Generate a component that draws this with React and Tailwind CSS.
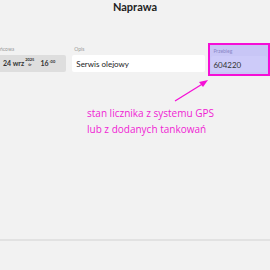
export default function App() {
  return (
    <div className="w-[270px] h-[270px] overflow-hidden bg-[#f2f2f2] relative" style={{ fontFamily: 'Lato, "Noto Sans", sans-serif' }}>
      <header className="h-[26px] flex items-center justify-center">
        <h1 className="text-[11px] font-bold text-[#222] mt-[-11px]">Naprawa</h1>
      </header>

      <div className="flex items-start mt-[18px] ml-[-32px]">
        {/* Data końcowa */}
        <div className="w-[99px] flex flex-col">
          <span className="text-[5px] text-[#9a9a9a] leading-none h-[9px] pt-[3px] pl-[15px] whitespace-nowrap">Data końcowa</span>
          <div className="h-[17px] bg-[#dedede] rounded-[2px] flex items-center pl-[35px] text-[#333] mt-[2px]">
            <span className="text-[7px] font-bold">24 wrz</span>
            <span className="flex flex-col items-center leading-none text-[4px] font-bold mx-[1px] -mt-[2px]">
              <span>2025</span>
              <span className="mt-[1px]">śr</span>
            </span>
            <span className="text-[7px] font-bold ml-[5px]">16</span>
            <span className="text-[4px] font-bold self-start mt-[4px] ml-[1px]">:00</span>
          </div>
        </div>

        {/* Opis */}
        <div className="w-[134px] ml-[6px] flex flex-col">
          <span className="text-[5px] text-[#9a9a9a] leading-none h-[9px] pt-[3px] pl-[2px]">Opis</span>
          <div className="h-[17px] bg-white rounded-[2px] flex items-center pl-[4px] text-[8px] text-[#222] mt-[2px]">
            Serwis olejowy
          </div>
        </div>

        {/* Przebieg */}
        <div className="ml-[3px] mt-[-1px] w-[62px] h-[33px] border-2 border-[#f50fd6] bg-[#c8c6f6] flex flex-col px-[1px] py-[1px]">
          <span className="text-[5px] text-[#8a86c8] leading-none pl-[2px] pt-[3px]">Przebieg</span>
          <div className="h-[16px] mt-[2px] bg-[#cdcbf9] rounded-[2px] flex items-center pl-[2px] pt-[2px] text-[8px] text-[#333]">
            604220
          </div>
        </div>
      </div>

      {/* arrow */}
      <svg className="absolute left-[170px] top-[76px]" width="42" height="30" viewBox="0 0 42 30">
        <line x1="5" y1="25" x2="34" y2="7" stroke="#f50fd6" strokeWidth="1.3" />
        <polygon points="38,4 29,6 33,11" fill="#f50fd6" />
      </svg>

      <div className="absolute left-[87px] top-[105px] text-[10px] leading-[16px] text-[#f01cd4]" style={{ fontFamily: '"Open Sans", "Noto Sans", sans-serif' }}>
        <div>stan licznika z systemu GPS</div>
        <div>lub z dodanych tankowań</div>
      </div>

      <div className="absolute left-0 right-0 top-[239px] h-[2px] bg-[#e2e2e2]" />
    </div>
  );
}
